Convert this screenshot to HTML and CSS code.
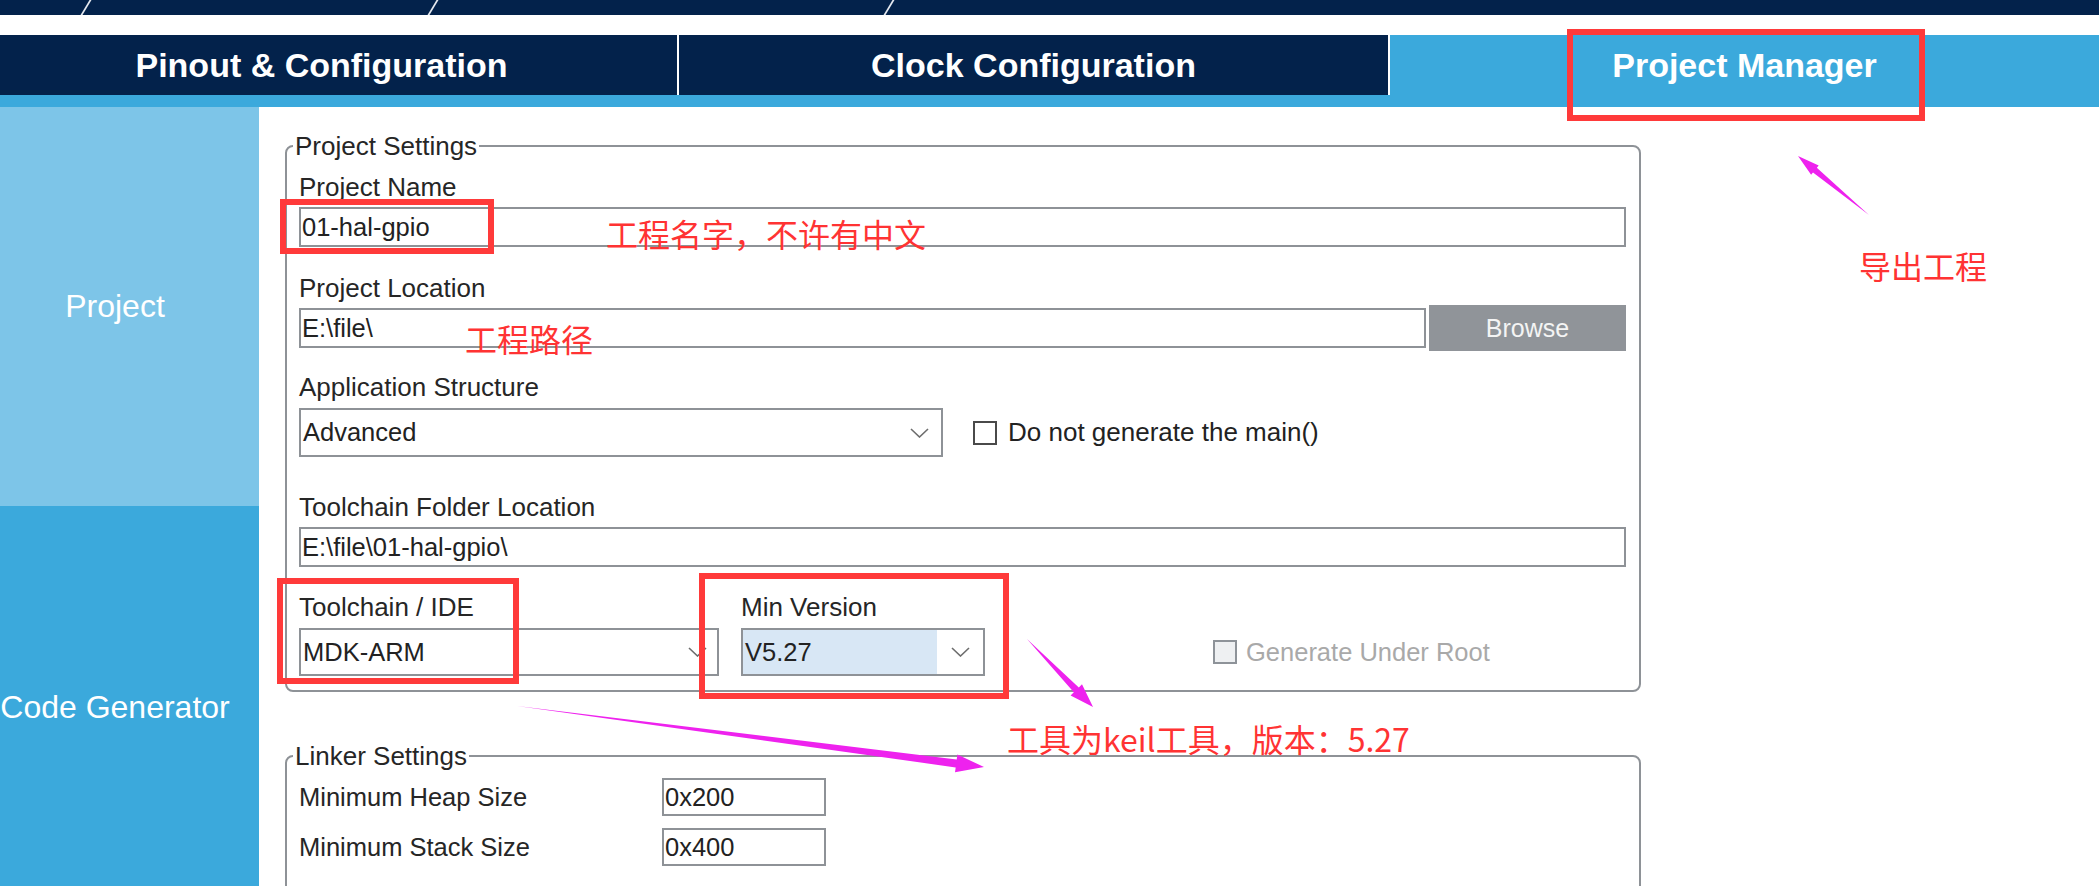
FILE: index.html
```html
<!DOCTYPE html>
<html lang="zh-CN">
<head>
<meta charset="utf-8">
<title>Project Manager</title>
<link rel="stylesheet" href="styles.css">
</head>
<body>
<div class="app">
  <div class="crumbs">
    <div class="crumb crumb-1"></div><span class="crumb-sep"></span>
    <div class="crumb crumb-2"></div><span class="crumb-sep"></span>
    <div class="crumb crumb-3"></div><span class="crumb-sep"></span>
  </div>
  <nav class="tabs">
    <div class="tab tab-pinout">Pinout &amp; Configuration</div>
    <div class="tab">Clock Configuration</div>
    <div class="tab tab-active">Project Manager</div>
  </nav>
  <div class="strip"></div>
  <div class="main">
    <aside class="side">
      <div class="side-item side-project">Project</div>
      <div class="side-item side-code">Code Generator</div>
    </aside>
    <section class="content">
      <fieldset class="group">
        <legend>Project Settings</legend>
        <div class="group-body">
          <div class="label lbl-name">Project Name</div>
          <div class="field fld-name">01-hal-gpio</div>
          <div class="label lbl-loc">Project Location</div>
          <div class="loc-row">
            <div class="field loc-input">E:\file\</div>
            <div class="browse">Browse</div>
          </div>
          <div class="label lbl-app">Application Structure</div>
          <div class="app-row">
            <div class="select select-app">
              <span class="select-value">Advanced</span>
              <svg class="chev" width="19" height="10" viewBox="0 0 19 10"><polyline points="1,1 9.5,9 18,1" fill="none" stroke="#6d6d6d" stroke-width="1.6"/></svg>
            </div>
            <span class="check"></span>
            <span class="check-text">Do not generate the main()</span>
          </div>
          <div class="label lbl-folder">Toolchain Folder Location</div>
          <div class="field fld-folder">E:\file\01-hal-gpio\</div>
          <div class="tool-row">
            <div class="tool-col">
              <div class="label">Toolchain / IDE</div>
              <div class="select select-tool">
                <span class="select-value">MDK-ARM</span>
                <svg class="chev chev-tool" width="19" height="10" viewBox="0 0 19 10"><polyline points="1,1 9.5,9 18,1" fill="none" stroke="#6d6d6d" stroke-width="1.6"/></svg>
              </div>
            </div>
            <div class="ver-col">
              <div class="label">Min Version</div>
              <div class="select select-ver">
                <span class="select-value ver-value">V5.27</span>
                <svg class="chev chev-ver" width="19" height="10" viewBox="0 0 19 10"><polyline points="1,1 9.5,9 18,1" fill="none" stroke="#6d6d6d" stroke-width="1.6"/></svg>
              </div>
            </div>
            <div class="gen">
              <span class="check check-disabled"></span>
              <span class="check-text check-text-disabled">Generate Under Root</span>
            </div>
          </div>
        </div>
      </fieldset>
      <fieldset class="group group-linker">
        <legend>Linker Settings</legend>
        <div class="group-body linker-body">
          <div class="lk-row">
            <span class="lk-label">Minimum Heap Size</span>
            <span class="lk-input">0x200</span>
          </div>
          <div class="lk-row">
            <span class="lk-label">Minimum Stack Size</span>
            <span class="lk-input">0x400</span>
          </div>
        </div>
      </fieldset>
    </section>
  </div>

  <div class="notes">
    <div class="mark mark-pm"></div>
    <div class="mark mark-name"></div>
    <div class="mark mark-tool"></div>
    <div class="mark mark-ver"></div>
    <div class="note note-name">工程名字，不许有中文</div>
    <div class="note note-loc">工程路径</div>
    <div class="note note-export">导出工程</div>
    <div class="note note-tool">工具为keil工具，版本：5.27</div>
    <svg class="arrows" width="2099" height="886" viewBox="0 0 2099 886">
      <polygon points="1798,156 1811.1,174.7 1813,172.4 1869,215 1816.8,167.8 1818.7,165.5" fill="#ee22ee"/>
      <polygon points="1093,707 1082,684.2 1078.8,687.4 1027,639 1073.8,692.2 1070.6,695.4" fill="#ee22ee"/>
      <polygon points="984,767 957.4,754.5 956.7,759.4 517,706 955.7,767.4 955,772.3" fill="#ee22ee"/>
    </svg>
  </div>
</div>
</body>
</html>
```

FILE: styles.css
```css
* { box-sizing: border-box; }
html, body { margin: 0; padding: 0; }
body {
  width: 2099px;
  height: 886px;
  overflow: hidden;
  background: #ffffff;
  font-family: "Liberation Sans", Arial, sans-serif;
  color: #262626;
}
.app {
  position: relative;
  width: 2099px;
  height: 886px;
  overflow: hidden;
}

/* breadcrumb strip */
.crumbs {
  height: 15px;
  background: #03224b;
  display: flex;
}
.crumb { flex: none; height: 15px; }
.crumb-1 { width: 85px; }
.crumb-2 { width: 345px; }
.crumb-3 { width: 454px; }
.crumb-sep {
  flex: none;
  width: 2px;
  height: 15px;
  background: #e6eaf0;
  transform: skewX(-31deg);
}

/* tabs */
.tabs {
  margin-top: 20px;
  height: 60px;
  display: grid;
  grid-template-columns: 677px 709px 1fr;
  column-gap: 2px;
  background: #ffffff;
}
.tab {
  display: flex;
  align-items: center;
  justify-content: center;
  background: #03224b;
  color: #ffffff;
  font-size: 34px;
  font-weight: 700;
  white-space: nowrap;
}
.tab-pinout { padding-right: 34px; }
.tab-active { background: #3ba9dc; }
.strip { height: 12px; background: #3ba9dc; }

/* main */
.main { display: flex; height: 779px; }
.side {
  width: 259px;
  flex: none;
  display: flex;
  flex-direction: column;
}
.side-item {
  display: flex;
  align-items: center;
  justify-content: center;
  padding-right: 29px;
  color: #ffffff;
  font-size: 32px;
  white-space: nowrap;
}
.side-project { height: 399px; background: #7dc5e8; }
.side-code { flex: 1; background: #3ba9dc; padding-top: 22px; }

.content {
  flex: 1;
  padding: 24px 0 0 26px;
}
.group {
  width: 1356px;
  margin: 0;
  padding: 0;
  min-width: 0;
  border: 2px solid #8e9297;
  border-radius: 8px;
}
.group legend {
  margin-left: 6px;
  padding: 0 2px;
  font-size: 26px;
  line-height: 30px;
  height: 30px;
  color: #262626;
}
.group-linker { margin-top: 49px; }
.group-body {
  display: flex;
  flex-direction: column;
  padding: 11px 13px 14px 12px;
}

.label {
  font-size: 26px;
  line-height: 30px;
  height: 30px;
  white-space: nowrap;
}
.lbl-loc { margin-top: 26px; }
.lbl-app { margin-top: 21px; }
.lbl-folder { margin-top: 35px; }

.field {
  height: 40px;
  border: 2px solid #8e9297;
  font-size: 25.5px;
  line-height: 36px;
  padding-left: 1px;
  white-space: nowrap;
  overflow: hidden;
  color: #222222;
}
.fld-name { margin-top: 5px; }
.fld-folder { margin-top: 5px; }

.loc-row {
  display: flex;
  align-items: center;
  height: 46px;
  margin-top: 2px;
}
.loc-input { width: 1127px; flex: none; }
.browse {
  margin-left: 3px;
  width: 197px;
  height: 46px;
  background: #909499;
  color: #f4f4f4;
  font-size: 25px;
  display: flex;
  align-items: center;
  justify-content: center;
}

.app-row {
  display: flex;
  align-items: center;
  height: 49px;
  margin-top: 6px;
}
.select {
  display: flex;
  align-items: center;
  border: 2px solid #8e9297;
  font-size: 25.5px;
  color: #222222;
  padding-left: 2px;
  white-space: nowrap;
}
.select-value { flex: 1; }
.chev { flex: none; margin-right: 12px; }
.select-app { width: 644px; height: 49px; }

.check {
  flex: none;
  width: 24px;
  height: 24px;
  border: 2px solid #4a4a4a;
  background: #ffffff;
}
.app-row .check { margin-left: 30px; }
.check-text {
  margin-left: 11px;
  font-size: 26px;
  white-space: nowrap;
  color: #222222;
}

.tool-row {
  display: flex;
  align-items: flex-end;
  margin-top: 25px;
}
.tool-col { width: 420px; flex: none; }
.ver-col { width: 244px; flex: none; margin-left: 22px; }
.tool-col .select,
.ver-col .select { margin-top: 6px; height: 48px; }
.chev-tool { margin-right: 10px; }
.select-ver { padding-left: 0; }
.ver-value {
  flex: none;
  width: 194px;
  align-self: stretch;
  display: flex;
  align-items: center;
  padding-left: 2px;
  background: #d8e7f5;
}
.chev-ver { margin-left: auto; margin-right: 13px; }
.gen {
  margin-left: 228px;
  height: 48px;
  display: flex;
  align-items: center;
}
.check-disabled {
  background: #eef0f2;
  border-color: #8e9399;
}
.check-text-disabled { color: #a9a9a9; margin-left: 9px; font-size: 25.5px; }

/* linker */
.linker-body { padding: 7px 13px 40px 12px; }
.lk-row {
  display: flex;
  align-items: center;
  height: 38px;
}
.lk-row + .lk-row { margin-top: 12px; }
.lk-label {
  width: 363px;
  flex: none;
  font-size: 25.5px;
  white-space: nowrap;
}
.lk-input {
  width: 164px;
  height: 38px;
  border: 2px solid #8e9297;
  font-size: 25.5px;
  line-height: 34px;
  padding-left: 1px;
  color: #222222;
}

/* annotations drawn over the screenshot */
.notes {
  position: absolute;
  left: 0;
  top: 0;
  width: 2099px;
  height: 886px;
  pointer-events: none;
}
.mark {
  position: absolute;
  border: 6px solid #ff3a3a;
}
.mark-pm { left: 1567px; top: 29px; width: 358px; height: 92px; }
.mark-name { left: 280px; top: 199px; width: 214px; height: 55px; }
.mark-tool { left: 277px; top: 578px; width: 242px; height: 106px; }
.mark-ver { left: 699px; top: 573px; width: 310px; height: 126px; }
.note {
  position: absolute;
  color: #ff3333;
  font-family: "Noto Sans CJK SC", "Noto Sans", sans-serif;
  font-size: 32px;
  line-height: 32px;
  white-space: nowrap;
}
.note-name { left: 606px; top: 217px; }
.note-loc { left: 465px; top: 322px; }
.note-export { left: 1859px; top: 249px; }
.note-tool { left: 1007px; top: 722px; }
.arrows { position: absolute; left: 0; top: 0; }
```
